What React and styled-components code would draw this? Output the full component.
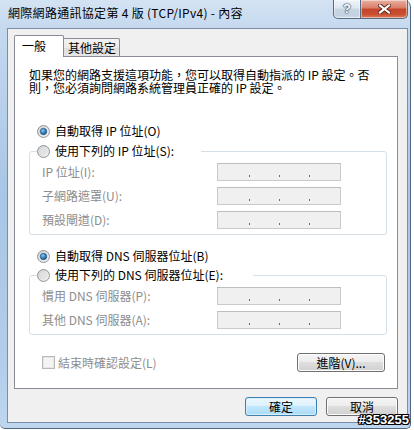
import React, { useId } from 'react';
import styled, { createGlobalStyle } from 'styled-components';

const GlobalStyle = createGlobalStyle`
  html, body { margin: 0; padding: 0; background: #ffffff; }
  body {
    width: 414px; height: 430px; overflow: hidden;
    font-family: "Noto Sans CJK TC", "Liberation Sans", sans-serif;
    font-size: 12px; color: #000;
  }
  * { box-sizing: border-box; }
`;

const Frame = styled.div`
  position: relative;
  width: 411px;
  height: 429px;
  display: flex;
  flex-direction: column;
  padding: 0 2px 5px 7px;
  background: linear-gradient(180deg, #d4e3f3 0%, #c4d8ee 7%, #a9c6e6 45%, #b3cdea 85%, #bed6ef 100%);
  border-right: 1px solid #51667e;
  border-bottom: 1px solid #51667e;
  border-radius: 0 7px 5px 5px;
`;

const TitleBar = styled.div`
  display: flex;
  align-items: flex-start;
  height: 28px;
  flex-shrink: 0;
`;

const TitleText = styled.div`
  flex: 1;
  padding: 5px 0 0 1px;
  font-size: 12px;
  line-height: 16px;
  letter-spacing: 0.3px;
  color: #000;
  white-space: nowrap;
`;

const CaptionButton = styled.div`
  height: 19px;
  width: ${p => p.$w}px;
  display: flex;
  align-items: center;
  justify-content: center;
  border: 1px solid #596b80;
  border-top: none;
  border-left: ${p => (p.$close ? 'none' : '1px solid #596b80')};
  border-radius: ${p => (p.$close ? '0 0 5px 0' : '0 0 0 5px')};
  background: ${p =>
    p.$close
      ? 'linear-gradient(180deg, #eab1a2 0%, #d97d66 45%, #c5442b 50%, #c9502f 80%, #dc7d5e 100%)'
      : 'linear-gradient(180deg, #f0f4f9 0%, #dde6f0 45%, #c8d5e3 50%, #c3d1e1 85%, #d2dfec 100%)'};
  box-shadow: inset 0 0 0 1px rgba(255, 255, 255, 0.45);
`;

const HelpGlyph = styled.span`
  font-family: "Liberation Sans", sans-serif;
  font-weight: bold;
  font-size: 13px;
  line-height: 13px;
  color: #fff;
  margin-top: -1px;
  text-shadow: 0 0 1px #31425a, 0 0 1px #31425a, 0 0 2px #31425a;
`;

const Client = styled.div`
  flex: 1;
  display: flex;
  flex-direction: column;
  background: #f0f0f0;
  border: 1px solid #7b8ea5;
  padding: 6px 9px 6px 6px;
`;

const TabStrip = styled.div`
  position: relative;
  z-index: 2;
  display: flex;
  align-items: flex-end;
  height: 21px;
`;

const Tab = styled.div`
  position: relative;
  z-index: ${p => (p.$active ? 2 : 1)};
  height: ${p => (p.$active ? 22 : 18)}px;
  margin-bottom: ${p => (p.$active ? -1 : 0)}px;
  margin-left: ${p => (p.$active ? 0 : -1)}px;
  width: ${p => p.$w}px;
  padding-left: ${p => (p.$active ? 7 : 4)}px;
  border: 1px solid #898c95;
  border-bottom: none;
  border-radius: 2px 2px 0 0;
  background: ${p => (p.$active ? '#ffffff' : 'linear-gradient(180deg, #f3f3f3 0%, #ebebeb 50%, #dedede 51%, #e6e6e6 100%)')};
  font-size: 12px;
  line-height: ${p => (p.$active ? 20 : 17)}px;
  white-space: nowrap;
`;

const Panel = styled.div`
  flex: 1;
  display: flex;
  flex-direction: column;
  background: #ffffff;
  border: 1px solid #898c95;
  padding: 11px 10px 13px 14px;
`;

const Description = styled.p`
  margin: 0;
  font-size: 12px;
  line-height: 13px;
  white-space: nowrap;
`;

const OptionRow = styled.label`
  display: flex;
  align-items: center;
  gap: 5px;
  height: 16px;
  margin-top: ${p => p.$mt || 0}px;
  margin-left: 8px;
  font-size: 12px;
  line-height: 16px;
  white-space: nowrap;
`;

const Group = styled.fieldset`
  margin: ${p => p.$mt || 0}px 0 0 0;
  padding: 4px 0 5px 12px;
  border: 1px solid #d5dfe5;
  border-radius: 3px;
  min-width: 0;
`;

const Legend = styled.legend`
  margin-left: -5px;
  padding: 0 ${p => p.$pr}px 0 0;
  height: 16px;
  background: #fff;
`;

const LegendRow = styled.span`
  display: flex;
  align-items: center;
  gap: 5px;
  height: 16px;
  font-size: 12px;
  line-height: 16px;
  white-space: nowrap;
`;

const FieldGrid = styled.div`
  display: grid;
  grid-template-columns: 175px 124px;
  row-gap: 6px;
  align-items: center;
`;

const FieldLabel = styled.span`
  color: #8d8d8d;
  font-size: 12px;
  line-height: 18px;
  white-space: nowrap;
`;

const IpBox = styled.div`
  height: 18px;
  display: flex;
  align-items: flex-end;
  padding: 0 0 3px 31px;
  gap: 29px;
  background: #f0f0f0;
  border: 1px solid #c9c9c9;
  border-top-color: #bdbdbd;
`;

const Dot = styled.span`
  width: 1px;
  height: 2px;
  background: #6a6a6a;
`;

const BottomRow = styled.div`
  display: flex;
  align-items: center;
  justify-content: space-between;
  margin-top: 18px;
  padding: 0 2px 0 13px;
`;

const CheckLabel = styled.span`
  display: flex;
  align-items: center;
  gap: 3px;
  color: #8d8d8d;
  font-size: 12px;
  line-height: 16px;
  white-space: nowrap;
`;

const CheckBox = styled.span`
  width: 13px;
  height: 13px;
  border: 1px solid #b9b9b9;
  background: #f4f4f4;
  box-shadow: inset 0 0 0 1px #e6e6e6;
`;

const Button = styled.div`
  width: ${p => p.$w}px;
  height: 19px;
  display: flex;
  align-items: center;
  justify-content: center;
  border: 1px solid ${p => (p.$default ? '#3c7fb1' : '#707070')};
  border-radius: 3px;
  background: ${p =>
    p.$default
      ? 'linear-gradient(180deg, #ecf7fd 0%, #dcf1fc 48%, #c1e6fc 50%, #a9dbf6 100%)'
      : 'linear-gradient(180deg, #f4f4f4 0%, #ececec 48%, #dedede 50%, #d0d0d0 100%)'};
  box-shadow: inset 0 0 0 1px ${p => (p.$default ? '#d8f0fb' : '#fcfcfc')};
  font-size: 12px;
  line-height: 16px;
  white-space: nowrap;
`;

const ButtonRow = styled.div`
  display: flex;
  justify-content: flex-end;
  gap: 9px;
  margin-top: 8px;
`;

const Watermark = styled.div`
  position: absolute;
  right: 1px;
  bottom: 2px;
  font-family: "Liberation Sans", sans-serif;
  font-weight: bold;
  font-size: 13px;
  line-height: 12px;
  color: #fff;
  text-shadow: 1px 0 0 #000, -1px 0 0 #000, 0 1px 0 #000, 0 -1px 0 #000,
    1px 1px 0 #000, -1px -1px 0 #000, 1px -1px 0 #000, -1px 1px 0 #000;
`;

function Radio({ checked }) {
  const id = useId().replace(/:/g, '');
  return (
    <svg width="13" height="13" viewBox="0 0 13 13" style={{ flexShrink: 0 }}>
      <defs>
        <linearGradient id={`o${id}`} x1="0" y1="0" x2="1" y2="1">
          <stop offset="0" stopColor="#cfcfcf" />
          <stop offset="1" stopColor="#f4f4f4" />
        </linearGradient>
        <radialGradient id={`d${id}`} cx="0.4" cy="0.35" r="0.7">
          <stop offset="0" stopColor="#8fd2f6" />
          <stop offset="0.45" stopColor="#3c8ccc" />
          <stop offset="1" stopColor="#1b4f7e" />
        </radialGradient>
      </defs>
      <circle cx="6.5" cy="6.5" r="6" fill={`url(#o${id})`} stroke="#8f969d" strokeWidth="1" />
      {checked ? (
        <circle cx="6.5" cy="6.5" r="3.2" fill={`url(#d${id})`} stroke="#1e4d74" strokeWidth="0.6" />
      ) : (
        <circle cx="6.5" cy="6.5" r="3.5" fill="#e2e2e2" opacity="0.6" />
      )}
    </svg>
  );
}

function IpField() {
  return (
    <IpBox>
      <Dot />
      <Dot />
      <Dot />
    </IpBox>
  );
}

export default function App() {
  return (
    <>
      <GlobalStyle />
      <Frame>
        <TitleBar>
          <TitleText>網際網路通訊協定第 4 版 (TCP/IPv4) - 內容</TitleText>
          <CaptionButton $w={28}>
            <HelpGlyph>?</HelpGlyph>
          </CaptionButton>
          <CaptionButton $w={47} $close>
            <svg width="13" height="10" viewBox="0 0 13 10">
              <path d="M2 1.5 L11 8.5 M11 1.5 L2 8.5" stroke="#5a2418" strokeWidth="4" strokeLinecap="square" />
              <path d="M2 1.5 L11 8.5 M11 1.5 L2 8.5" stroke="#ffffff" strokeWidth="2.2" strokeLinecap="square" />
            </svg>
          </CaptionButton>
        </TitleBar>
        <Client>
          <TabStrip>
            <Tab $active $w={50}>一般</Tab>
            <Tab $w={57}>其他設定</Tab>
          </TabStrip>
          <Panel>
            <Description>
              如果您的網路支援這項功能，您可以取得自動指派的 IP 設定。否
              <br />
              則，您必須詢問網路系統管理員正確的 IP 設定。
            </Description>

            <OptionRow $mt={29}>
              <Radio checked />
              自動取得 IP 位址(O)
            </OptionRow>
            <Group $mt={4}>
              <Legend $pr={27}>
                <LegendRow>
                  <Radio />
                  使用下列的 IP 位址(S):
                </LegendRow>
              </Legend>
              <FieldGrid>
                <FieldLabel>IP 位址(I):</FieldLabel>
                <IpField />
                <FieldLabel>子網路遮罩(U):</FieldLabel>
                <IpField />
                <FieldLabel>預設閘道(D):</FieldLabel>
                <IpField />
              </FieldGrid>
            </Group>

            <OptionRow $mt={13}>
              <Radio checked />
              自動取得 DNS 伺服器位址(B)
            </OptionRow>
            <Group $mt={3}>
              <Legend $pr={30}>
                <LegendRow>
                  <Radio />
                  使用下列的 DNS 伺服器位址(E):
                </LegendRow>
              </Legend>
              <FieldGrid>
                <FieldLabel>慣用 DNS 伺服器(P):</FieldLabel>
                <IpField />
                <FieldLabel>其他 DNS 伺服器(A):</FieldLabel>
                <IpField />
              </FieldGrid>
            </Group>

            <BottomRow>
              <CheckLabel>
                <CheckBox />
                結束時確認設定(L)
              </CheckLabel>
              <Button $w={88}>進階(V)...</Button>
            </BottomRow>
          </Panel>
          <ButtonRow>
            <Button $w={72} $default>確定</Button>
            <Button $w={72}>取消</Button>
          </ButtonRow>
        </Client>
        <Watermark>#353255</Watermark>
      </Frame>
    </>
  );
}
